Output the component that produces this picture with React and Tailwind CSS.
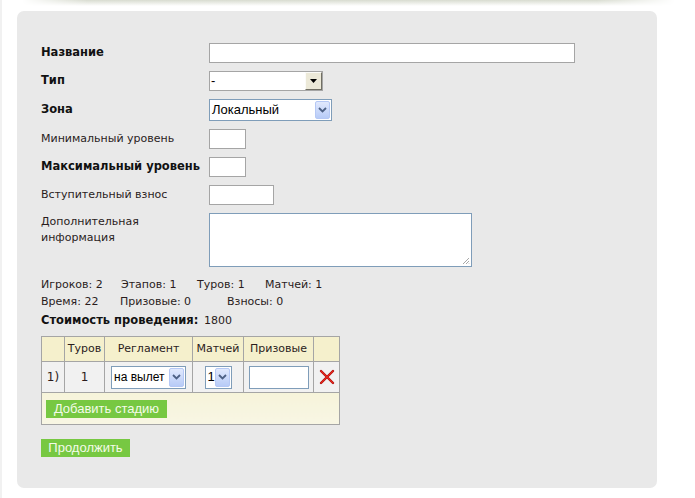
import React from "react";

const font = "font-['DejaVu_Sans',sans-serif]";
const lbl = `${font} text-[11px] text-[#2a1c1c]`;
const lblBold = `${font} text-[11.5px] font-bold text-[#111]`;
const arial = "font-['Liberation_Sans',Arial,sans-serif]";

function Chevron() {
  return (
    <div className="my-[1px] mr-[1px] flex w-[15px] shrink-0 items-center justify-center rounded-[2px] border border-[#b5c8f5] bg-[linear-gradient(to_bottom,#e1e9fd,#b7cbf7)]">
      <svg width="9" height="6" viewBox="0 0 9 6">
        <path d="M1 1 L4.5 4.5 L8 1" fill="none" stroke="#4d6185" strokeWidth="1.8" />
      </svg>
    </div>
  );
}

function XPSelect({ text, className, small }) {
  return (
    <div className={`flex border border-[#7f9db9] bg-white ${className}`}>
      <div className={`flex min-w-0 flex-1 items-center overflow-hidden whitespace-nowrap pl-[2px] text-black ${small ? "text-[12px]" : "text-[13px]"} ${arial}`}>{text}</div>
      <Chevron />
    </div>
  );
}

function ClassicSelect() {
  return (
    <div className="flex h-[20px] w-[114px] border border-[#a5a5a5] bg-white">
      <div className={`flex flex-1 items-center pl-[1px] text-[13px] text-black ${arial}`}>-</div>
      <div className="flex w-[17px] items-center justify-center border-t border-l border-b border-r border-t-[#fbfbf8] border-l-[#fbfbf8] border-b-[#716f64] border-r-[#716f64] bg-[#ece9d8]">
        <svg width="7" height="4" viewBox="0 0 7 4">
          <path d="M0 0 H7 L3.5 4 Z" fill="#000" />
        </svg>
      </div>
    </div>
  );
}

function Row({ label, bold, children, top }) {
  return (
    <div className={`flex ${top ? "items-start" : "items-center"}`}>
      <div className={`w-[168px] shrink-0 ${bold ? lblBold : lbl} ${top ? "pt-[1px] leading-[16px]" : ""}`}>
        {label}
      </div>
      {children}
    </div>
  );
}

function GreenButton({ children, className }) {
  return (
    <div className={`flex items-center justify-center bg-[#77c842] text-[13px] text-[#f4fbe9] ${arial} ${className}`}>
      {children}
    </div>
  );
}

export default function App() {
  const th = `border border-[#a5a5a5] bg-[#f5f0cc] text-center font-normal ${lbl}`;
  const td = `border border-[#a5a5a5] bg-[#f1f1f1] text-center`;
  const tdText = `${font} text-[12px] text-[#2a1c1c]`;
  return (
    <div className="h-[498px] w-[695px] overflow-hidden border-l-2 border-[#f1f1f1] bg-white">
      <div className="mx-[20px] h-[6px] bg-[linear-gradient(to_bottom,#d8dcd0,#ffffff)] [mask-image:linear-gradient(to_right,transparent,black_10%,black_88%,transparent)]" />
      <div className="ml-[15px] mt-[5px] h-[477px] w-[640px] rounded-[7px] bg-[#e9e9e9] pl-[24px] pt-[32px]">
        <div className="flex flex-col gap-2">
          <Row label="Название" bold>
            <div className="h-[20px] w-[366px] border border-[#a5a5a5] bg-white" />
          </Row>
          <Row label="Тип" bold>
            <ClassicSelect />
          </Row>
          <Row label="Зона" bold>
            <XPSelect text="Локальный" className="h-[22px] w-[123px]" />
          </Row>
          <Row label="Минимальный уровень">
            <div className="h-[20px] w-[37px] border border-[#a5a5a5] bg-white" />
          </Row>
          <Row label="Максимальный уровень" bold>
            <div className="h-[20px] w-[37px] border border-[#a5a5a5] bg-white" />
          </Row>
          <Row label="Вступительный взнос">
            <div className="h-[20px] w-[65px] border border-[#a5a5a5] bg-white" />
          </Row>
          <Row label={<>Дополнительная<br />информация</>} top>
            <div className="flex h-[54px] w-[263px] items-end justify-end border border-[#7f9db9] bg-white p-[1px]">
              <svg width="8" height="8" viewBox="0 0 8 8">
                <path d="M7 1 L1 7 M7 4 L4 7 M7 6.5 L6.5 7" stroke="#a8a8a8" strokeWidth="1" />
              </svg>
            </div>
          </Row>
        </div>

        <div className={`mt-[9px] leading-[17px] ${lbl}`}>
          <div className="flex">
            <span className="w-[80px]">Игроков: 2</span>
            <span className="w-[76px]">Этапов: 1</span>
            <span className="w-[68px]">Туров: 1</span>
            <span>Матчей: 1</span>
          </div>
          <div className="flex">
            <span className="w-[79px]">Время: 22</span>
            <span className="w-[107px]">Призовые: 0</span>
            <span>Взносы: 0</span>
          </div>
          <div className="mt-[2px] flex items-baseline">
            <span className={`w-[163px] ${lblBold}`}>Стоимость проведения:</span>
            <span>1800</span>
          </div>
        </div>

        <table className="mt-[7px] w-[298px] table-fixed border-collapse border border-[#a5a5a5] bg-[linear-gradient(to_bottom,#f3efc8,#f8f6e4)]">
          <colgroup>
            <col className="w-[23px]" />
            <col className="w-[40px]" />
            <col className="w-[88px]" />
            <col className="w-[51px]" />
            <col className="w-[70px]" />
            <col className="w-[26px]" />
          </colgroup>
          <tbody>
            <tr className="h-[25px]">
              <th className={th}></th>
              <th className={th}>Туров</th>
              <th className={th}>Регламент</th>
              <th className={th}>Матчей</th>
              <th className={th}>Призовые</th>
              <th className={th}></th>
            </tr>
            <tr className="h-[31px]">
              <td className={`${td} ${tdText}`}>1)</td>
              <td className={`${td} ${tdText}`}>1</td>
              <td className={td}>
                <div className="flex justify-center">
                  <XPSelect text="на вылет" small className="h-[23px] w-[75px]" />
                </div>
              </td>
              <td className={td}>
                <div className="flex justify-center">
                  <XPSelect text="1" className="h-[23px] w-[27px]" />
                </div>
              </td>
              <td className={td}>
                <div className="flex justify-center">
                  <div className="h-[23px] w-[60px] border border-[#7f9db9] bg-white" />
                </div>
              </td>
              <td className={td}>
                <div className="flex justify-center">
                  <svg width="16" height="16" viewBox="0 0 16 16">
                    <path d="M2 2 L14 14 M14 2 L2 14" stroke="#9b1010" strokeWidth="2.4" strokeLinecap="round" />
                    <path d="M2 2 L14 14 M14 2 L2 14" stroke="#e8261c" strokeWidth="1.4" strokeLinecap="round" />
                  </svg>
                </div>
              </td>
            </tr>
            <tr className="h-[32px]">
              <td colSpan={6} className="border border-[#a5a5a5] px-[4px]">
                <GreenButton className="h-[18px] w-[121px]">Добавить стадию</GreenButton>
              </td>
            </tr>
          </tbody>
        </table>

        <GreenButton className="mt-[14px] h-[18px] w-[89px]">Продолжить</GreenButton>
      </div>
    </div>
  );
}
